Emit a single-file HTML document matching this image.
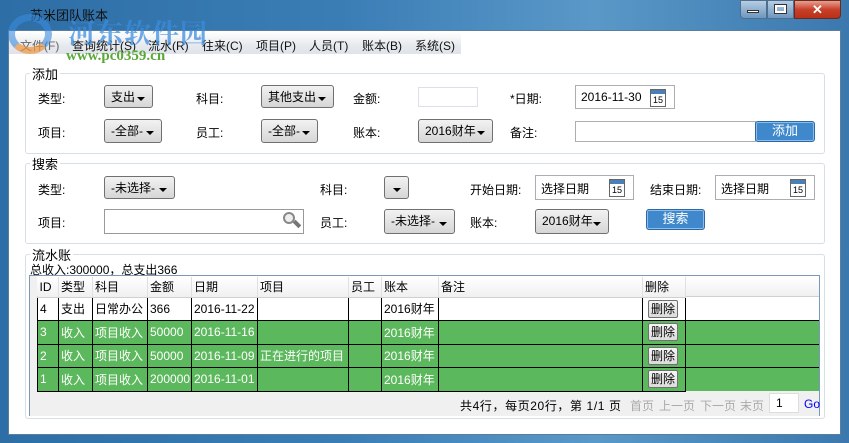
<!DOCTYPE html>
<html><head><meta charset="utf-8">
<style>
*{box-sizing:border-box;margin:0;padding:0}
body{width:849px;height:443px;overflow:hidden;background:#4a8cc0;font-family:"Liberation Sans","Noto Sans CJK SC",sans-serif;font-size:12px;color:#000;position:relative}
.a{position:absolute}
.frame{left:0;top:0;width:849px;height:443px;background:linear-gradient(90deg,#2e6ea6 0%,#3a7db5 40%,#5a98c8 70%,#3a78ae 100%)}
.client{left:8px;top:30px;width:833px;height:405px;background:#fff;border:1px solid #5a7ea0}
.menubar{left:9px;top:33px;width:452px;height:21px;background:linear-gradient(#fdfdfd,#e6e9ee 60%,#dfe3ea)}
.menu{top:37px;font-size:12px;color:#111}
.grp{border:1px solid #d5dfe5;border-radius:3px}
.lg{background:#fff;padding:0 2px;font-size:13px}
.lbl{font-size:12px}
.sel{border:1px solid #707070;border-radius:3px;background:linear-gradient(#f2f2f2,#e4e4e4 50%,#d6d6d6);font-size:12px;padding:2px 0 0 6px}
.sel:after{content:"";position:absolute;right:7px;top:50%;margin-top:0px;border-left:4px solid transparent;border-right:4px solid transparent;border-top:4px solid #000}
.inp{border:1px solid #abadb3;background:#fff}
.date{border:1px solid #abadb3;background:#fff;padding:4px 0 0 5px}
.cal{position:absolute;right:8px;top:3px;width:16px;height:18px;border:1px solid #666;background:#fff;font-size:9px;text-align:center;line-height:13px;padding-top:4px}
.cal:before{content:"";position:absolute;left:0;top:0;right:0;height:4px;background:#4a7fb8}
.btn{background:#3f88cc;border:1px solid #2b68a8;border-radius:3px;color:#fff;text-align:center;font-size:13px;line-height:18px;box-shadow:inset 0 0 0 1px #8dbde8}
table{border-collapse:collapse;position:absolute;left:37px;top:277px;font-size:12px;table-layout:fixed;width:648px}
td{height:23.5px;padding:0 2px;white-space:nowrap;overflow:hidden;border:1px solid #000}
tr.h td{height:20px;border:none;border-right:1px solid #e0e0e0;background:linear-gradient(#fff,#f0f0f0);border-bottom:1px solid #d0d0d0}
tr.g td{background:#5cb85c;color:#fff}
.del{display:inline-block;border:1px solid #707070;border-radius:2px;background:linear-gradient(#f6f6f6,#dcdcdc);color:#000;padding:0 2px;line-height:16px;margin-left:3px}
.pg{top:397px;color:#aaa}
</style></head><body>
<div class="a frame"></div>
<div class="a" style="left:740px;top:0;width:27px;height:19px;border:1px solid #4d6f8f;border-radius:0 0 0 4px;background:linear-gradient(#b7cde3,#6d96bf)"></div>
<div class="a" style="left:747px;top:10px;width:12px;height:3px;background:#fff;border:1px solid #333"></div>
<div class="a" style="left:767px;top:0;width:27px;height:19px;border:1px solid #4d6f8f;background:linear-gradient(#b7cde3,#6d96bf)"></div>
<div class="a" style="left:775px;top:5px;width:11px;height:8px;border:2px solid #fff;outline:1px solid #333"></div>
<div class="a" style="left:794px;top:0;width:47px;height:19px;border:1px solid #6a2a20;border-radius:0 0 4px 0;background:linear-gradient(#e8a090,#c8402a 50%,#b83018);color:#fff;font-weight:bold;font-size:13px;text-align:center;line-height:17px">✕</div>
<div class="a" style="left:30px;top:5px;color:#111;font-size:13px">苏米团队账本</div>
<div class="a client"></div>
<div class="a menubar"></div>
<div class="a menu" style="left:20px;color:#666">文件(F)</div>
<div class="a menu" style="left:72px">查询统计(S)</div>
<div class="a menu" style="left:148px">流水(R)</div>
<div class="a menu" style="left:202px">往来(C)</div>
<div class="a menu" style="left:256px">项目(P)</div>
<div class="a menu" style="left:309px">人员(T)</div>
<div class="a menu" style="left:362px">账本(B)</div>
<div class="a menu" style="left:415px">系统(S)</div>
<div class="a" style="left:68px;top:12px;font-size:27px;font-weight:bold;color:rgba(60,140,220,.75);font-family:'Noto Serif CJK SC',serif;letter-spacing:1px">河东软件园</div>
<div class="a" style="left:66px;top:48px;font-size:15px;font-weight:bold;color:#5aa83a;font-family:'Liberation Serif',serif">www.pc0359.cn</div>
<div class="a" style="left:8px;top:14px;width:44px;height:40px;border-radius:50%;border:7px solid rgba(60,140,220,.6);border-bottom-color:rgba(240,150,60,.7)"></div>

<div class="a grp" style="left:25px;top:73px;width:800px;height:81px"></div>
<div class="a lg" style="left:30px;top:64px">添加</div>
<div class="a lbl" style="left:38px;top:90px">类型:</div>
<div class="a sel" style="left:104px;top:85px;width:49px;height:23px">支出</div>
<div class="a lbl" style="left:196px;top:90px">科目:</div>
<div class="a sel" style="left:261px;top:85px;width:73px;height:23px">其他支出</div>
<div class="a lbl" style="left:353px;top:90px">金额:</div>
<div class="a inp" style="left:418px;top:87px;width:60px;height:20px;border-color:#dde"></div>
<div class="a lbl" style="left:510px;top:90px">*日期:</div>
<div class="a date" style="left:575px;top:85px;width:100px;height:24px">2016-11-30<div class="cal">15</div></div>
<div class="a lbl" style="left:38px;top:124px">项目:</div>
<div class="a sel" style="left:104px;top:119px;width:58px;height:24px">-全部-</div>
<div class="a lbl" style="left:196px;top:124px">员工:</div>
<div class="a sel" style="left:261px;top:119px;width:57px;height:24px">-全部-</div>
<div class="a lbl" style="left:353px;top:124px">账本:</div>
<div class="a sel" style="left:418px;top:119px;width:75px;height:24px">2016财年</div>
<div class="a lbl" style="left:510px;top:124px">备注:</div>
<div class="a inp" style="left:575px;top:121px;width:181px;height:21px"></div>
<div class="a btn" style="left:755px;top:121px;width:60px;height:21px">添加</div>

<div class="a grp" style="left:25px;top:163px;width:800px;height:81px"></div>
<div class="a lg" style="left:30px;top:154px">搜索</div>
<div class="a lbl" style="left:38px;top:181px">类型:</div>
<div class="a sel" style="left:104px;top:176px;width:71px;height:23px">-未选择-</div>
<div class="a lbl" style="left:320px;top:181px">科目:</div>
<div class="a sel" style="left:384px;top:176px;width:25px;height:23px"></div>
<div class="a lbl" style="left:470px;top:181px">开始日期:</div>
<div class="a date" style="left:535px;top:175px;width:99px;height:25px">选择日期<div class="cal">15</div></div>
<div class="a lbl" style="left:650px;top:181px">结束日期:</div>
<div class="a date" style="left:715px;top:175px;width:100px;height:25px">选择日期<div class="cal">15</div></div>
<div class="a lbl" style="left:38px;top:214px">项目:</div>
<div class="a inp" style="left:104px;top:209px;width:200px;height:25px;border-color:#999"></div>
<div class="a" style="left:283px;top:212px;width:12px;height:12px;border:2px solid #888;border-radius:50%;background:#eee"></div>
<div class="a" style="left:293px;top:222px;width:8px;height:4px;background:#777;transform:rotate(45deg)"></div>
<div class="a lbl" style="left:320px;top:214px">员工:</div>
<div class="a sel" style="left:384px;top:209px;width:71px;height:25px">-未选择-</div>
<div class="a lbl" style="left:470px;top:214px">账本:</div>
<div class="a sel" style="left:535px;top:209px;width:74px;height:25px">2016财年</div>
<div class="a btn" style="left:646px;top:209px;width:59px;height:21px">搜索</div>

<div class="a grp" style="left:25px;top:254px;width:800px;height:165px"></div>
<div class="a lg" style="left:30px;top:245px">流水账</div>
<div class="a" style="left:30px;top:261px">总收入:300000，总支出366</div>
<div class="a" style="left:29px;top:275px;width:791px;height:141px;background:#f0f0f0;border:1px solid #7a98b8;border-bottom:none"></div>
<div class="a" style="left:30px;top:276px;width:789px;height:115px;background:#fff"></div>
<div class="a" style="left:30px;top:276px;width:7px;height:115px;background:#f0f0f0"></div>
<div class="a" style="left:37px;top:277px;width:782px;height:20px;background:linear-gradient(#fff,#f0f0f0);border-bottom:1px solid #d0d0d0"></div>
<div class="a" style="left:685px;top:320px;width:134px;height:71px;background:#5cb85c;border-top:1px solid #000"></div>
<div class="a" style="left:685px;top:344px;width:134px;height:1px;background:#000"></div>
<div class="a" style="left:685px;top:367px;width:134px;height:1px;background:#000"></div>
<table>
<colgroup><col style="width:21px"><col style="width:34px"><col style="width:55px"><col style="width:44px"><col style="width:66px"><col style="width:91px"><col style="width:33px"><col style="width:57px"><col style="width:204px"><col style="width:43px"></colgroup>
<tr class="h"><td>ID</td><td>类型</td><td>科目</td><td>金额</td><td>日期</td><td>项目</td><td>员工</td><td>账本</td><td>备注</td><td>删除</td></tr>
<tr><td>4</td><td>支出</td><td>日常办公</td><td>366</td><td>2016-11-22</td><td></td><td></td><td>2016财年</td><td></td><td><span class="del">删除</span></td></tr>
<tr class="g"><td>3</td><td>收入</td><td>项目收入</td><td>50000</td><td>2016-11-16</td><td></td><td></td><td>2016财年</td><td></td><td><span class="del">删除</span></td></tr>
<tr class="g"><td>2</td><td>收入</td><td>项目收入</td><td>50000</td><td>2016-11-09</td><td>正在进行的项目</td><td></td><td>2016财年</td><td></td><td><span class="del">删除</span></td></tr>
<tr class="g"><td>1</td><td>收入</td><td>项目收入</td><td>200000</td><td>2016-11-01</td><td></td><td></td><td>2016财年</td><td></td><td><span class="del">删除</span></td></tr>
</table>
<div class="a" style="left:460px;top:397px;letter-spacing:0.6px">共4行，每页20行，第 1/1 页</div>
<div class="a pg" style="left:630px">首页</div>
<div class="a pg" style="left:659px">上一页</div>
<div class="a pg" style="left:700px">下一页</div>
<div class="a pg" style="left:740px">末页</div>
<div class="a" style="left:769px;top:393px;width:30px;height:20px;background:#fff;border:1px solid #ddd;padding:2px 0 0 6px">1</div>
<div class="a" style="left:804px;top:397px;color:#00f">Go</div>
</body></html>
